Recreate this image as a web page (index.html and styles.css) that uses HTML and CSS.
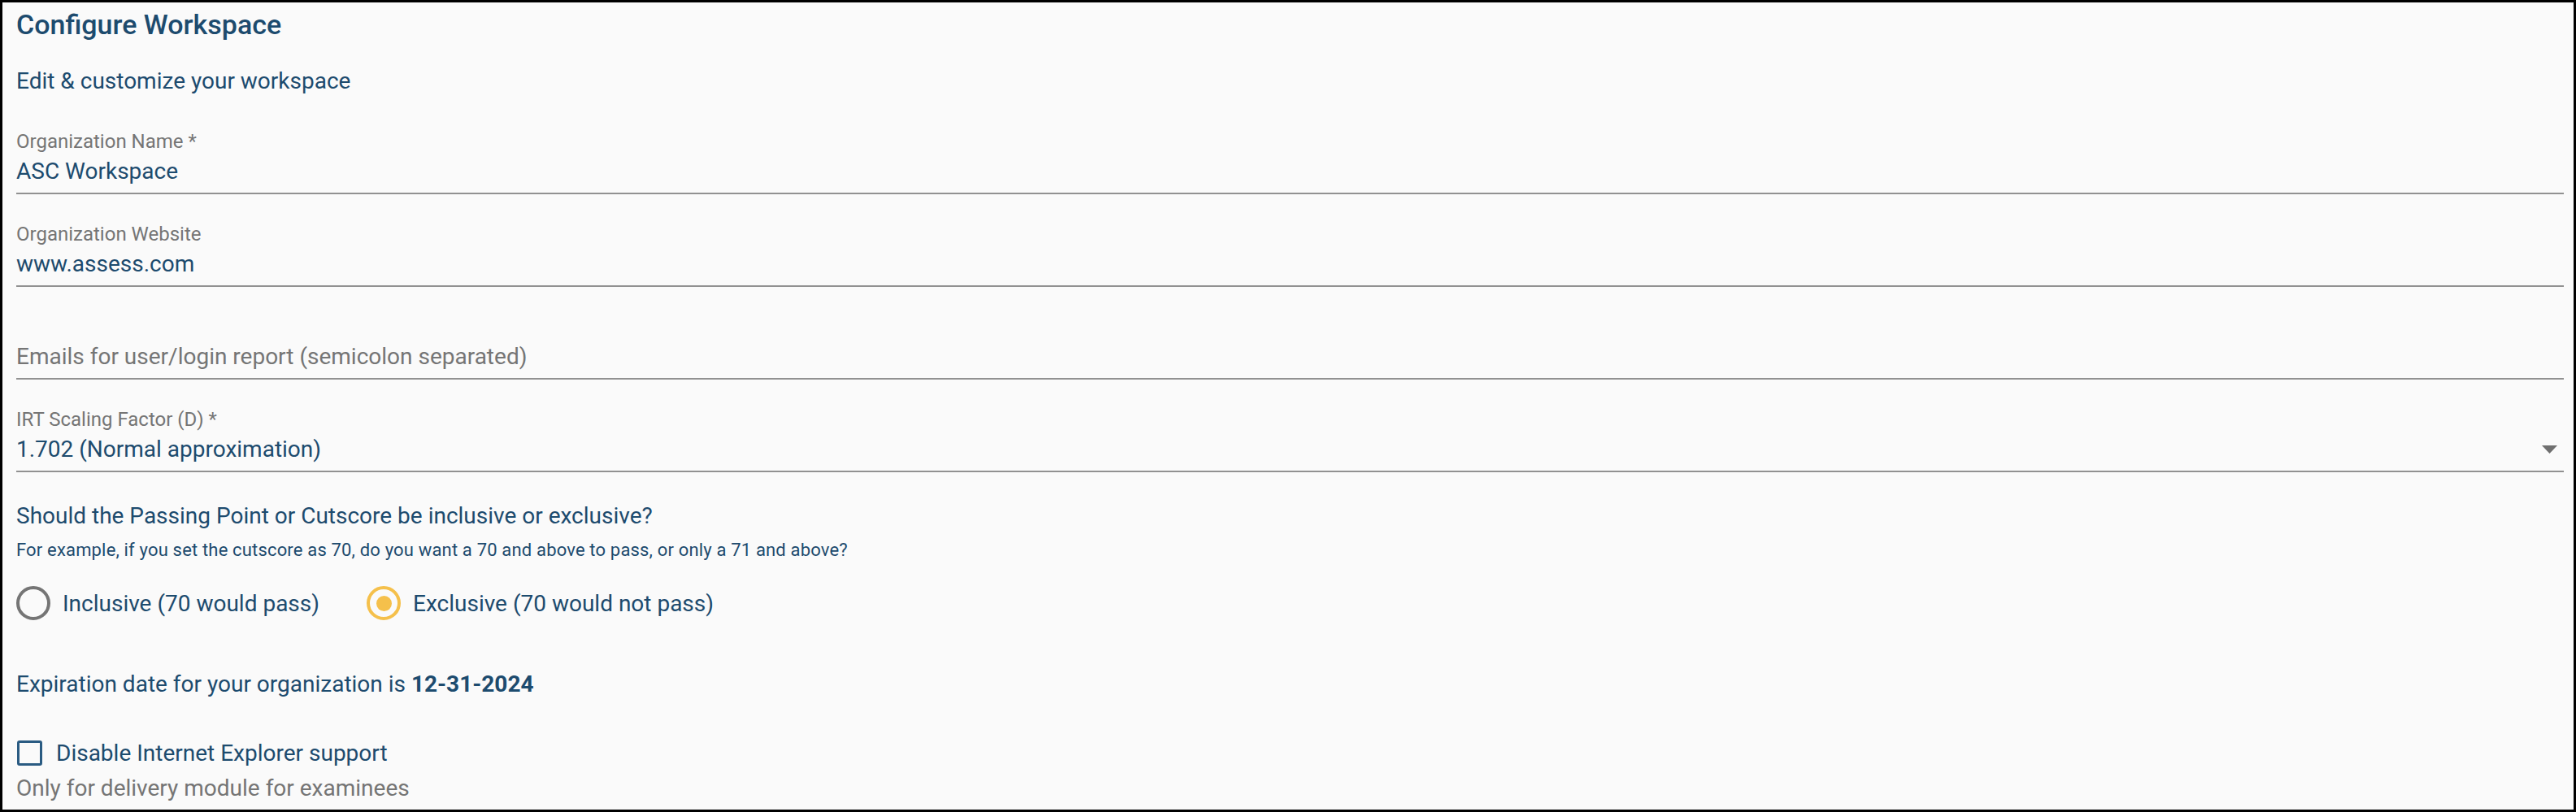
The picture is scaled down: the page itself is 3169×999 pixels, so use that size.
FILE: index.html
```html
<!DOCTYPE html>
<html>
<head>
    <link rel="stylesheet" href="styles.css">
</head>
<body>
<div class="frame">
    <h2 class="title">Configure Workspace</h2>
    <p class="subtitle">Edit &amp; customize your workspace</p>

    <div class="fields">
        <div class="field">
            <div class="field-label">Organization Name *</div>
            <div class="field-value">ASC Workspace</div>
        </div>
        <div class="field">
            <div class="field-label">Organization Website</div>
            <div class="field-value">www.assess.com</div>
        </div>
        <div class="field">
            <div class="field-label"></div>
            <div class="field-value placeholder">Emails for user/login report (semicolon separated)</div>
        </div>
        <div class="field">
            <div class="field-label">IRT Scaling Factor (D) *</div>
            <div class="field-value select">
                <span>1.702 (Normal approximation)</span>
                <svg class="arrow" width="19" height="10" viewBox="0 0 19 10"><polygon points="0,0 19,0 9.5,10" fill="#6f6f6f"/></svg>
            </div>
        </div>
    </div>

    <p class="question">Should the Passing Point or Cutscore be inclusive or exclusive?</p>
    <p class="hint">For example, if you set the cutscore as 70, do you want a 70 and above to pass, or only a 71 and above?</p>

    <div class="radio-group">
        <label class="radio"><span class="radio-icon"></span>Inclusive (70 would pass)</label>
        <label class="radio checked"><span class="radio-icon"></span>Exclusive (70 would not pass)</label>
    </div>

    <p class="expiry">Expiration date for your organization is <strong>12-31-2024</strong></p>

    <label class="check"><span class="check-box"></span>Disable Internet Explorer support</label>
    <p class="note">Only for delivery module for examinees</p>
</div>
</body>
</html>
```

FILE: styles.css
```css
*{
    box-sizing: border-box;
}
body{
    margin: 0;
    font-family: Roboto, "Liberation Sans", sans-serif;
}
.frame{
    height: 999px;
    border: 3px solid #000;
    background: #fafafa;
    padding: 4px 12px 0 17px;
    overflow: hidden;
    color: #1d4b6e;
}
.title{
    margin: 0;
    font-size: 34px;
    font-weight: 500;
    line-height: 46px;
}
.subtitle{
    margin: 30px 0 0;
    font-size: 28px;
    line-height: 34px;
}
.fields{
    display: flex;
    flex-direction: column;
    gap: 35px;
    margin-top: 43px;
}
.field{
    padding-bottom: 9px;
    border-bottom: 2px solid rgba(0,0,0,0.42);
}
.field-label{
    height: 28px;
    font-size: 24px;
    line-height: 28px;
    color: #757575;
}
.field-value{
    margin-top: 6px;
    font-size: 28px;
    line-height: 34px;
}
.placeholder{
    color: #757575;
}
.select{
    display: flex;
    justify-content: space-between;
    align-items: center;
}
.arrow{
    margin-right: 8px;
}
.question{
    margin: 37px 0 0;
    font-size: 28px;
    line-height: 34px;
}
.hint{
    margin: 13px 0 0;
    font-size: 22px;
    line-height: 24px;
    letter-spacing: 0.17px;
}
.radio-group{
    display: flex;
    gap: 58px;
    margin-top: 32px;
    height: 42px;
}
.radio{
    display: flex;
    align-items: center;
    gap: 15px;
    font-size: 28px;
}
.radio-icon{
    position: relative;
    width: 42px;
    height: 42px;
    border: 4px solid #757575;
    border-radius: 50%;
}
.checked .radio-icon{
    border-color: #f5c04b;
}
.checked .radio-icon::after{
    content: "";
    position: absolute;
    left: 7.5px;
    top: 7.5px;
    width: 19px;
    height: 19px;
    border-radius: 50%;
    background: #f5c04b;
}
.expiry{
    margin: 62px 0 0;
    font-size: 28px;
    line-height: 34px;
}
.expiry strong{
    font-weight: 700;
}
.check{
    display: flex;
    align-items: center;
    gap: 17px;
    margin-top: 50px;
    height: 34px;
    font-size: 28px;
}
.check-box{
    width: 31px;
    height: 31px;
    margin-left: 1px;
    border: 3.5px solid #2a5b82;
    border-radius: 3px;
}
.note{
    margin: 10px 0 0;
    font-size: 28px;
    line-height: 34px;
    color: #757575;
}
```
